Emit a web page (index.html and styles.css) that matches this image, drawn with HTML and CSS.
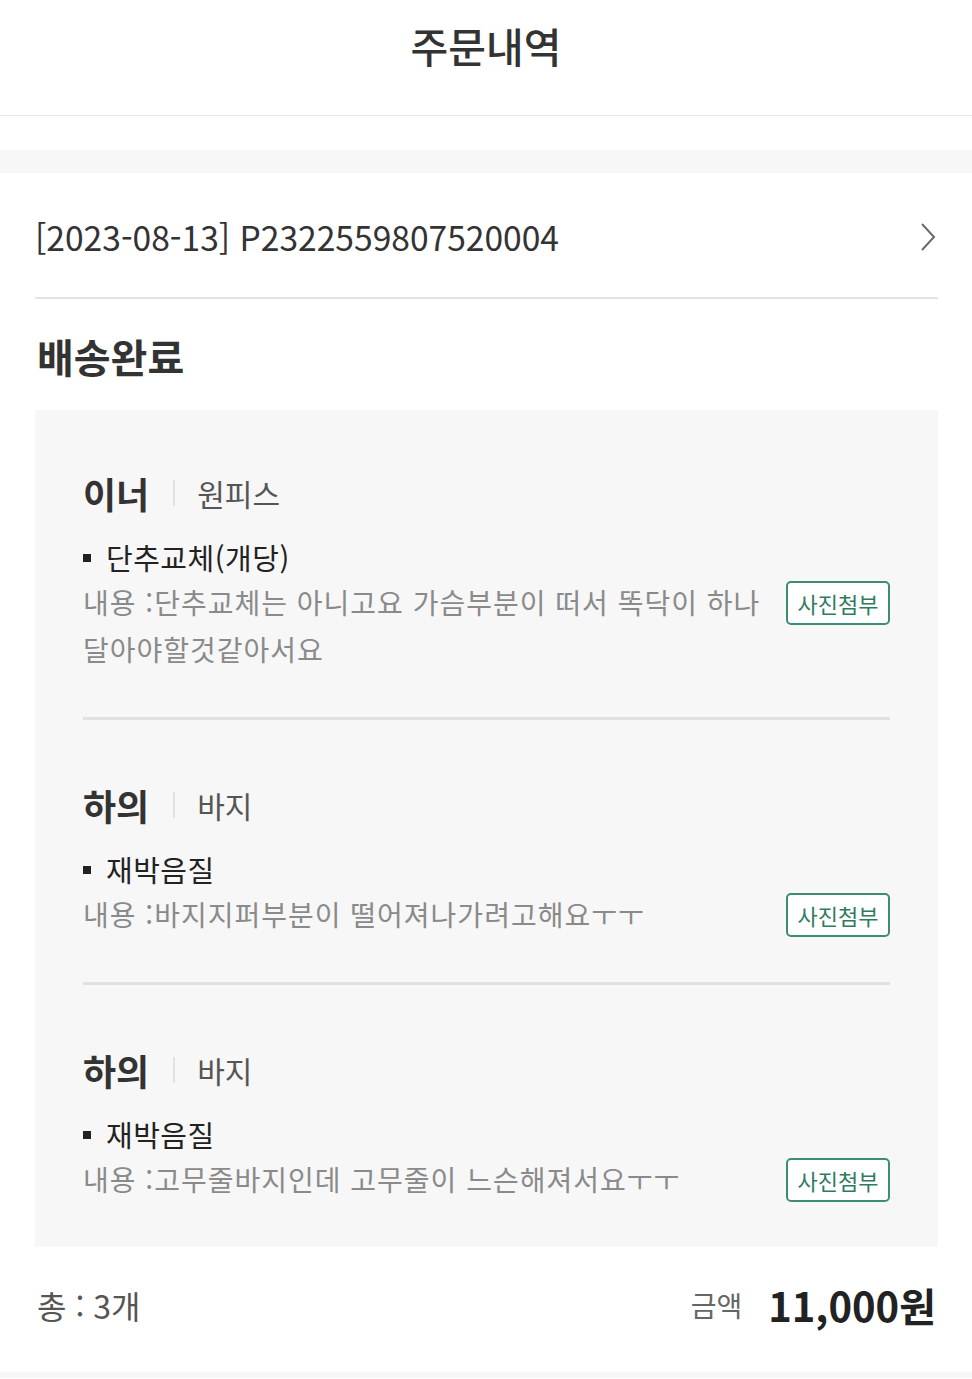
FILE: index.html
```html
<!DOCTYPE html>
<html lang="ko">
<head>
    <meta charset="UTF-8">
    <title>주문내역</title>
    <link rel="stylesheet" href="styles.css">
</head>
<body>
<header class="top">
    <h1>주문내역</h1>
</header>
<div class="band"></div>

<section class="order">
    <div class="order-no">
        <span>[2023-08-13] P2322559807520004</span>
        <svg class="chevron" width="18" height="30" viewBox="0 0 18 30">
            <polyline points="3,2 15,15 3,28" fill="none" stroke="#6b6b6b" stroke-width="2"/>
        </svg>
    </div>
    <h2 class="status">배송완료</h2>

    <div class="items">
        <div class="item">
            <div class="item-head">
                <span class="cat">이너</span>
                <span class="sep"></span>
                <span class="sub">원피스</span>
            </div>
            <div class="repair"><i class="dot"></i>단추교체(개당)</div>
            <div class="memo">
                <p>내용 :단추교체는 아니고요 가슴부분이 떠서 똑닥이 하나 달아야할것같아서요</p>
                <span class="badge">사진첨부</span>
            </div>
        </div>
        <div class="item">
            <div class="item-head">
                <span class="cat">하의</span>
                <span class="sep"></span>
                <span class="sub">바지</span>
            </div>
            <div class="repair"><i class="dot"></i>재박음질</div>
            <div class="memo">
                <p>내용 :바지지퍼부분이 떨어져나가려고해요ㅜㅜ</p>
                <span class="badge">사진첨부</span>
            </div>
        </div>
        <div class="item">
            <div class="item-head">
                <span class="cat">하의</span>
                <span class="sep"></span>
                <span class="sub">바지</span>
            </div>
            <div class="repair"><i class="dot"></i>재박음질</div>
            <div class="memo">
                <p>내용 :고무줄바지인데 고무줄이 느슨해져서요ㅜㅜ</p>
                <span class="badge">사진첨부</span>
            </div>
        </div>
    </div>

    <div class="total">
        <span class="count">총 : 3개</span>
        <span class="sum"><span class="label">금액</span><b>11,000원</b></span>
    </div>
</section>
<div class="band bottom"></div>
</body>
</html>
```
FILE: styles.css
```css
html, body {
    margin: 0;
    padding: 0;
    background: #fff;
    font-family: "Noto Sans CJK KR", "Noto Sans", sans-serif;
    color: #333;
}

header.top {
    height: 115px;
    border-bottom: 1px solid #e9e9e9;
    display: flex;
    align-items: center;
    justify-content: center;
}

h1 {
    margin: 0 0 25px 0;
    font-size: 41px;
    font-weight: 500;
    line-height: 44px;
    color: #333;
}

div.band {
    height: 23px;
    margin-top: 34px;
    background: #f7f7f7;
}

div.band.bottom {
    margin-top: 0;
    height: 6px;
}

div.order-no {
    margin: 0 34px 0 35px;
    padding: 40px 0 36px 0;
    border-bottom: 2px solid #e4e4e4;
    display: flex;
    align-items: center;
    justify-content: space-between;
    font-size: 33.6px;
    line-height: 48px;
    color: #333;
}

.chevron {
    display: block;
    margin-right: 1px;
}

h2.status {
    margin: 0;
    padding: 32px 0 29px 37px;
    font-size: 40px;
    line-height: 50px;
    font-weight: 700;
    color: #333;
}

div.items {
    margin: 0 34px 0 35px;
    padding: 0 48px 0 48px;
    background: #f7f7f7;
}

div.item {
    padding: 61px 0 44px 0;
}

div.item + div.item {
    border-top: 3px solid #e1e1e1;
    padding-top: 63px;
}

div.item-head {
    display: flex;
    align-items: center;
    height: 44px;
}

span.cat {
    font-size: 36px;
    font-weight: 700;
    color: #333;
}

span.sep {
    width: 2px;
    height: 26px;
    margin: 0 22px 0 24px;
    background: #e2e2e2;
}

span.sub {
    font-size: 30px;
    color: #555;
}

div.repair {
    margin-top: 20px;
    display: flex;
    align-items: center;
    font-size: 29px;
    letter-spacing: 0.5px;
    line-height: 44px;
    color: #222;
}

i.dot {
    width: 8px;
    height: 8px;
    margin: 2px 15px 0 0;
    background: #222;
}

div.memo {
    display: flex;
    align-items: flex-start;
    gap: 18px;
}

div.memo p {
    flex: 1;
    margin: 0;
    font-size: 28px;
    letter-spacing: 1px;
    line-height: 47px;
    word-break: keep-all;
    color: #8a8a8a;
}

span.badge {
    margin-top: 2px;
    width: 100px;
    height: 40px;
    border: 2px solid #3e8d70;
    border-radius: 5px;
    display: flex;
    align-items: center;
    justify-content: center;
    font-size: 22px;
    color: #2f7b5e;
    background: #fff;
}

div.total {
    display: flex;
    align-items: center;
    justify-content: space-between;
    padding: 33px 36px 42px 37px;
    line-height: 50px;
}

span.count {
    font-size: 32px;
    color: #555;
}

span.sum {
    display: flex;
    align-items: center;
}

span.label {
    font-size: 28px;
    color: #666;
    margin-right: 26px;
}

span.sum b {
    font-size: 40px;
    font-weight: 700;
    color: #222;
}
```
